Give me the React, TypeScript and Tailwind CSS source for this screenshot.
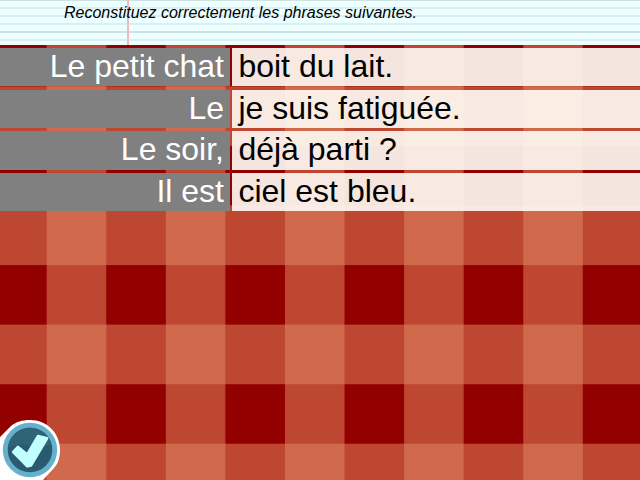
const rows = [
  { left: "Le petit chat", right: "boit du lait.", size: "h-[38px] mb-1" },
  { left: "Le", right: "je suis fatiguée.", size: "h-[38px] mb-[3px]" },
  { left: "Le soir,", right: "déjà parti ?", size: "h-[39px] mb-[3px]" },
  { left: "Il est", right: "ciel est bleu.", size: "h-[38px]" },
];

function Gingham() {
  return (
    <svg className="absolute inset-0" width="640" height="480" aria-hidden="true">
      <defs>
        <pattern id="gingham" x="46.7" y="26.8" width="119.14" height="119.14" patternUnits="userSpaceOnUse">
          <rect width="120" height="120" fill="#bd4731" />
          <rect x="59.5" width="59.64" height="59.5" fill="#920000" />
          <rect y="59.5" width="59.5" height="59.64" fill="#d1694c" />
        </pattern>
      </defs>
      <rect width="640" height="480" fill="url(#gingham)" />
    </svg>
  );
}

function NotebookLines() {
  return (
    <svg className="absolute inset-0" width="640" height="45" aria-hidden="true">
      <rect width="640" height="45" fill="#edffff" />
      <rect y="0" width="640" height="1" fill="#cfe2e2" />
      <rect y="7" width="640" height="2" fill="#d8eff4" />
      <rect y="15" width="640" height="2" fill="#d8eff4" />
      <rect y="23" width="640" height="2" fill="#d8eff4" />
      <rect y="31" width="640" height="2" fill="#cfe2e2" />
      <rect y="39" width="640" height="2" fill="#d8eff4" />
      <rect x="127" width="2" height="45" fill="#f2b9bd" />
    </svg>
  );
}

function ValidateButton() {
  return (
    <button className="absolute bottom-0 left-0 h-[60px] w-[60px]" aria-label="Valider">
      <svg width="60" height="60" viewBox="0 0 60 60">
        <path d="M0 17L11 6C16 2 22 0 30 0C47 0 60 13 60 30C60 37 58 44 54 48L43 60H0Z" fill="#fff" />
        <circle cx="30" cy="30" r="27.2" fill="#66b0cb" />
        <circle cx="30" cy="30" r="22.3" fill="#2a5a70" />
        <path d="M7.8 28A22.3 22.3 0 0 1 51.5 24Q42 29 30 26Q19 22 7.8 28Z" fill="#2e6378" />
        <path d="M13.3 32L18 27L27.2 34.6L38 16.2L47 18.4L31 45.3L27.3 46.2Z" fill="#c1ffff" stroke="#c1ffff" strokeWidth="2.8" strokeLinejoin="round" />
      </svg>
    </button>
  );
}

export default function App() {
  return (
    <main className="relative flex h-[480px] w-[640px] flex-col overflow-hidden font-['Liberation_Sans',Arial,sans-serif]">
      <Gingham />
      <header className="relative mb-[3px] h-[45px] shrink-0">
        <NotebookLines />
        <p className="relative pt-1 pl-16 text-[16px] leading-[18px] text-black italic">
          Reconstituez correctement les phrases suivantes.
        </p>
      </header>
      <section className="relative flex flex-col text-[32px] leading-[37px]">
        {rows.map((row) => (
          <div key={row.left} className={`flex gap-0.5 ${row.size}`}>
            <div className="w-[230px] bg-[#808080] pr-1.5 text-right whitespace-nowrap text-white">{row.left}</div>
            <div className="flex-1 bg-[#fdf8f1]/[.92] pl-[6.4px] whitespace-nowrap text-black">{row.right}</div>
          </div>
        ))}
      </section>
      <ValidateButton />
    </main>
  );
}
